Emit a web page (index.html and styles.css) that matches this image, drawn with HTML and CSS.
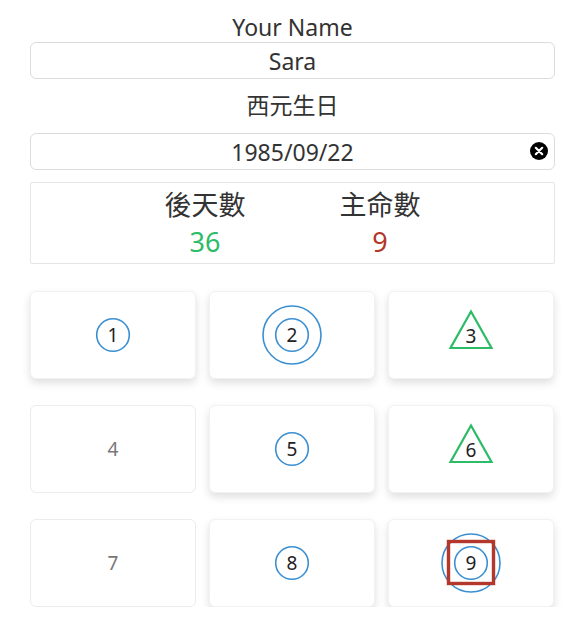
FILE: index.html
```html
<!DOCTYPE html>
<html>
<head>
<meta charset="utf-8">
<link rel="stylesheet" href="styles.css">
</head>
<body>
<div class="page">
  <div class="label first">Your Name</div>
  <div class="field"><span class="value">Sara</span></div>
  <div class="label second">西元生日</div>
  <div class="field date">
    <span class="value">1985/09/22</span>
    <span class="clear"><svg viewBox="0 0 18 18" width="18" height="18"><circle cx="9" cy="9" r="9" fill="#000"/><path d="M5.8 5.8L12.2 12.2M12.2 5.8L5.8 12.2" stroke="#fff" stroke-width="2.2" stroke-linecap="round"/></svg></span>
  </div>
  <div class="result">
    <div class="res-col">
      <div class="res-title">後天數</div>
      <div class="res-num green">36</div>
    </div>
    <div class="res-col">
      <div class="res-title">主命數</div>
      <div class="res-num red">9</div>
    </div>
  </div>
  <div class="grid">
    <div class="card raised"><div class="mark"><svg class="shape" viewBox="0 0 60 60"><circle cx="30" cy="30" r="16.3" class="ring"/></svg><span class="num">1</span></div></div>
    <div class="card raised"><div class="mark"><svg class="shape" viewBox="0 0 60 60"><circle cx="30" cy="30" r="16.3" class="ring"/><circle cx="30" cy="30" r="29" class="ring"/></svg><span class="num">2</span></div></div>
    <div class="card raised"><div class="mark"><svg class="shape" viewBox="0 0 60 60"><polygon points="30,6.5 50.5,43 9.5,43" class="tri"/></svg><span class="num tnum">3</span></div></div>
    <div class="card flat"><span class="num dim">4</span></div>
    <div class="card raised"><div class="mark"><svg class="shape" viewBox="0 0 60 60"><circle cx="30" cy="30" r="16.3" class="ring"/></svg><span class="num">5</span></div></div>
    <div class="card raised"><div class="mark"><svg class="shape" viewBox="0 0 60 60"><polygon points="30,6.5 50.5,43 9.5,43" class="tri"/></svg><span class="num tnum">6</span></div></div>
    <div class="card flat"><span class="num dim">7</span></div>
    <div class="card raised"><div class="mark"><svg class="shape" viewBox="0 0 60 60"><circle cx="30" cy="30" r="16.3" class="ring"/></svg><span class="num">8</span></div></div>
    <div class="card raised"><div class="mark"><svg class="shape" viewBox="0 0 60 60"><circle cx="30" cy="30" r="16.3" class="ring"/><circle cx="30" cy="30" r="29" class="ring"/><rect x="7.5" y="8.5" width="45" height="42" class="box"/></svg><span class="num">9</span></div></div>
  </div>
</div>
</body>
</html>
```
FILE: styles.css
```css
html, body {
  margin: 0;
  padding: 0;
  background: #fff;
}
body {
  font-family: "Noto Sans", "Noto Sans CJK TC", sans-serif;
  color: #333;
}
.page {
  width: 525px;
  margin-left: 30px;
  padding-top: 12px;
}
.label {
  text-align: center;
  font-size: 23px;
  line-height: 30px;
  color: #333;
}
.label.first {
  margin-bottom: 0;
}
.label.second {
  margin-top: 11px;
  margin-bottom: 13px;
}
.field {
  position: relative;
  box-sizing: border-box;
  height: 37px;
  border: 1px solid #dcdcdc;
  border-radius: 6px;
  display: flex;
  align-items: center;
  justify-content: center;
}
.value {
  font-size: 23px;
  color: #333;
}
.clear {
  position: absolute;
  right: 6px;
  top: 8px;
  width: 18px;
  height: 18px;
  display: block;
}
.clear svg {
  display: block;
}
.result {
  margin-top: 12px;
  box-sizing: border-box;
  height: 82px;
  border: 1px solid #e6e6e6;
  border-radius: 2px;
  display: flex;
  justify-content: center;
  padding-top: 3px;
}
.res-col {
  width: 175px;
  text-align: center;
}
.res-title {
  font-size: 27px;
  line-height: 38px;
  color: #333;
}
.res-num {
  font-size: 27px;
  line-height: 36px;
}
.green { color: #2dbb68; }
.red { color: #b3372b; }
.grid {
  margin-top: 27px;
  display: grid;
  grid-template-columns: repeat(3, 166px);
  column-gap: 13px;
  row-gap: 26px;
}
.card {
  box-sizing: border-box;
  height: 88px;
  border-radius: 6px;
  display: flex;
  align-items: center;
  justify-content: center;
  background: #fff;
}
.card.raised {
  border: 1px solid #f2f2f2;
  box-shadow: 0 4px 9px rgba(0, 0, 0, 0.13);
}
.card.flat {
  border: 1px solid #ececec;
}
.mark {
  position: relative;
  width: 60px;
  height: 60px;
  display: flex;
  align-items: center;
  justify-content: center;
}
.shape {
  position: absolute;
  left: 0;
  top: 0;
  width: 60px;
  height: 60px;
  overflow: visible;
}
.ring {
  fill: none;
  stroke: #3a8fd2;
  stroke-width: 1.6;
}
.tri {
  fill: none;
  stroke: #2dbb68;
  stroke-width: 2.2;
  stroke-linejoin: miter;
}
.box {
  fill: none;
  stroke: #b3372b;
  stroke-width: 3.4;
}
.num {
  position: relative;
  font-size: 19px;
  line-height: 24px;
  color: #222;
}
.num.tnum {
  top: 1px;
}
.num.dim {
  color: #777;
}
```
